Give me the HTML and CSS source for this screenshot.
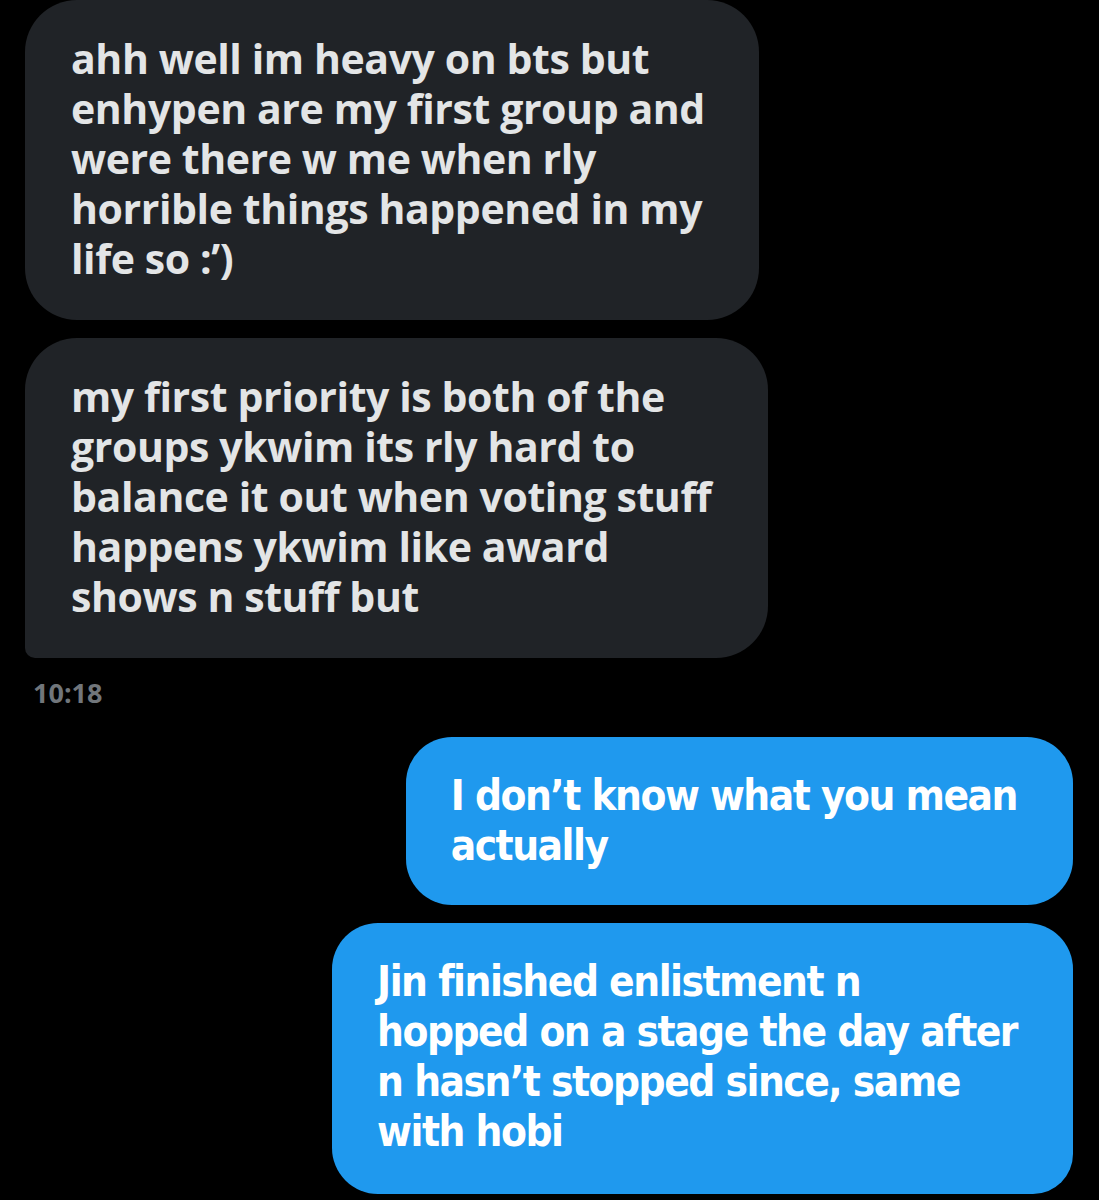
FILE: index.html
```html
<!DOCTYPE html>
<html lang="en">
<head>
    <meta charset="UTF-8">
    <title>Messages</title>
    <link rel="stylesheet" href="styles.css">
</head>
<body>
    <div class="thread">
        <div class="group received">
            <div class="bubble">ahh well im heavy on bts but<br>enhypen are my first group and<br>were there w me when rly<br>horrible things happened in my<br>life so :’)</div>
            <div class="bubble last">my first priority is both of the<br>groups ykwim its rly hard to<br>balance it out when voting stuff<br>happens ykwim like award<br>shows n stuff but</div>
            <div class="time">10:18</div>
        </div>
        <div class="group sent">
            <div class="bubble">I don’t know what you mean<br>actually</div>
            <div class="bubble last">Jin finished enlistment n<br>hopped on a stage the day after<br>n hasn’t stopped since, same<br>with hobi</div>
        </div>
    </div>
</body>
</html>
```

FILE: styles.css
```css
body {
    margin: 0;
    background: #000;
    font-family: "Open Sans", Lato, sans-serif;
    overflow: hidden;
}
.thread {
    padding: 0 26px 0 25px;
}
.group {
    display: flex;
    flex-direction: column;
    gap: 18px;
}
.received {
    align-items: flex-start;
}
.sent {
    align-items: flex-end;
    margin-top: 26px;
}
.bubble {
    font-size: 41px;
    font-weight: 700;
    line-height: 50px;
    letter-spacing: -0.4px;
    padding: 33px 54px 37px 46px;
    border-radius: 52px;
}
.received .bubble {
    background: #202327;
    color: #e3e5e6;
}
.received .bubble.last {
    padding-right: 57px;
    border-bottom-left-radius: 10px;
}
.sent .bubble {
    background: #1f99ee;
    color: #fff;
    padding: 34px 56px 34px 45px;
    font-family: "DejaVu Sans Condensed", sans-serif;
    font-size: 42px;
    letter-spacing: -1.5px;
    border-radius: 46px;
}
.sent .bubble.last {
    padding-bottom: 37px;
    border-bottom-right-radius: 40px;
}
.time {
    margin: -2px 0 0 8px;
    color: #71767b;
    font-size: 27px;
    font-weight: 700;
}
```
